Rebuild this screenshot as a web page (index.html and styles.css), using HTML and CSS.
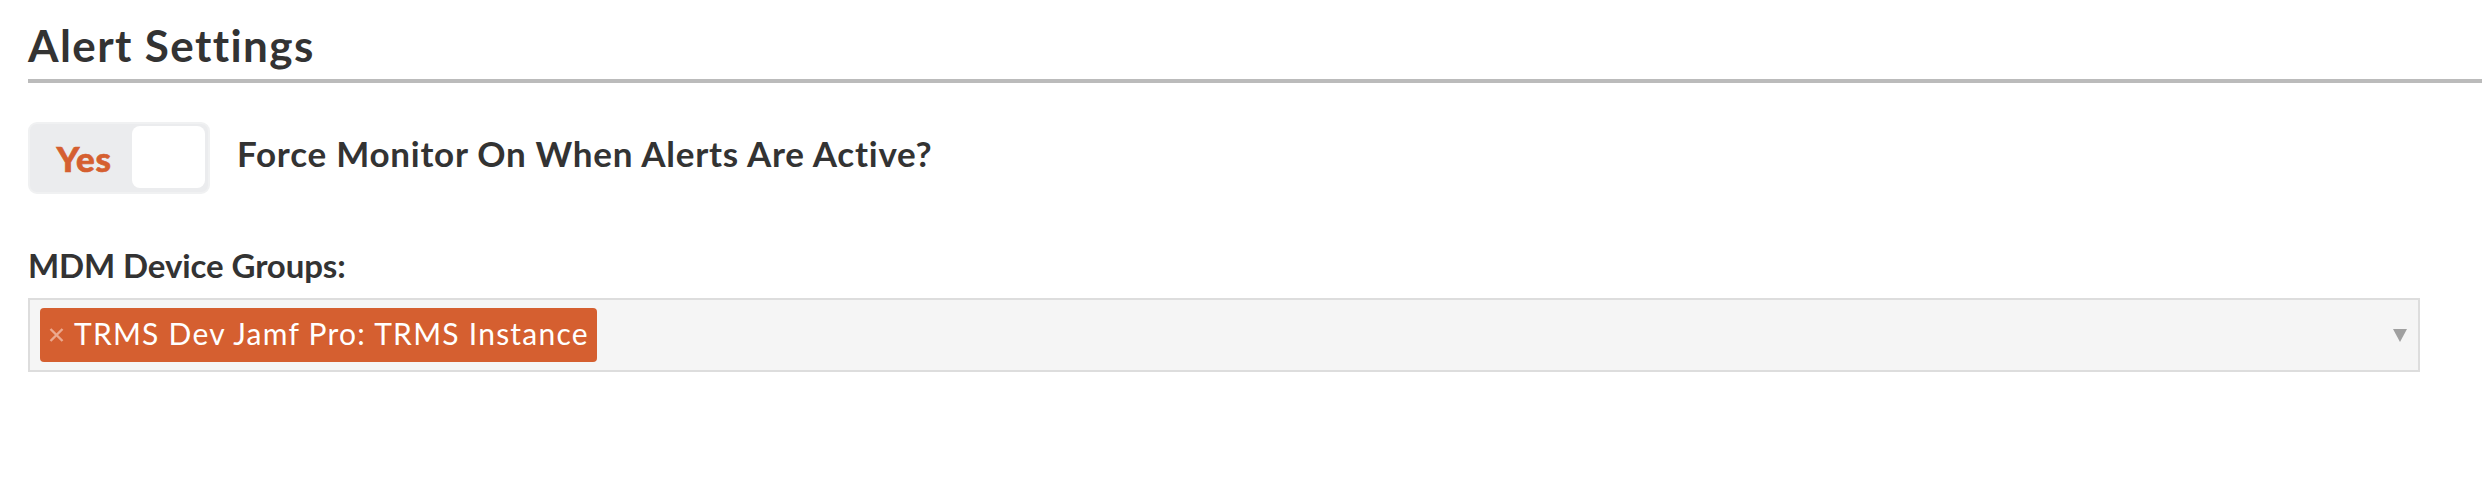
FILE: index.html
```html
<!DOCTYPE html>
<html lang="en">
<head>
    <meta charset="UTF-8">
    <meta name="viewport" content="width=device-width, initial-scale=1.0">
    <title>Alert Settings</title>
    <link rel="stylesheet" href="styles.css">
</head>
<body>

    <section class="settings">
        <h2 class="section-title">Alert Settings</h2>

        <div class="settings-body">
            <div class="toggle-row">
                <div class="toggle">
                    <span class="toggle-label">Yes</span>
                    <span class="toggle-knob"></span>
                </div>
                <span class="toggle-text">Force Monitor On When Alerts Are Active?</span>
            </div>

            <label class="field-label">MDM Device Groups:</label>
            <div class="multi-select">
                <span class="tag">
                    <svg class="tag-remove" width="15" height="14" viewBox="0 0 15 14">
                        <path d="M1.5 1 L13.5 13 M13.5 1 L1.5 13" stroke="currentColor" stroke-width="2.4" fill="none"/>
                    </svg>
                    TRMS Dev Jamf Pro: TRMS Instance
                </span>
                <span class="select-arrow"></span>
            </div>
        </div>
    </section>

</body>
</html>
```

FILE: styles.css
```css
body {
    margin: 0;
    background-color: #ffffff;
    color: #333333;
    font-family: 'Lato', 'Open Sans', sans-serif;
}

.settings {
    padding: 19px 0 0 28px;
}

.section-title {
    margin: 0;
    padding-bottom: 8px;
    font-size: 44px;
    line-height: 52px;
    font-weight: 700;
    letter-spacing: 1.4px;
    border-bottom: 4px solid #bbbbbb;
}

.settings-body {
    padding: 39px 62px 0 0;
}

.toggle-row {
    display: flex;
    align-items: flex-start;
}

.toggle {
    display: flex;
    align-items: center;
    width: 178px;
    height: 68px;
    border: 2px solid #f0f1f2;
    border-radius: 9px;
    background-color: #ebecee;
    box-sizing: content-box;
}

.toggle-label {
    width: 96px;
    padding-left: 6px;
    text-align: center;
    color: #d55f30;
    font-size: 35px;
    font-weight: 900;
    letter-spacing: 0.6px;
    -webkit-text-stroke: 0.6px #d55f30;
}

.toggle-knob {
    width: 73px;
    height: 62px;
    background-color: #ffffff;
    border-radius: 8px;
    margin-top: -2px;
}

.toggle-text {
    margin: 10px 0 0 27px;
    font-size: 35px;
    line-height: 42px;
    font-weight: 700;
    letter-spacing: 0.75px;
}

.field-label {
    display: block;
    margin-top: 50px;
    font-size: 33px;
    line-height: 42px;
    font-weight: 700;
    letter-spacing: -0.1px;
}

.multi-select {
    display: flex;
    align-items: center;
    margin-top: 12px;
    height: 70px;
    padding: 0 11px 0 10px;
    border: 2px solid #dddddd;
    background-color: #f5f5f5;
}

.tag {
    display: flex;
    align-items: center;
    height: 54px;
    padding: 0 8px 4px 9px;
    box-sizing: border-box;
    border-radius: 4px;
    background-color: #d55f30;
    color: #ffffff;
    font-size: 30px;
    line-height: 34px;
    letter-spacing: 1.25px;
}

.tag-remove {
    margin: 4px 10px 0 0;
    color: #eba98f;
}

.select-arrow {
    margin-left: auto;
    width: 0;
    height: 0;
    border-left: 7px solid transparent;
    border-right: 7px solid transparent;
    border-top: 13px solid #a0a0a0;
}
```
